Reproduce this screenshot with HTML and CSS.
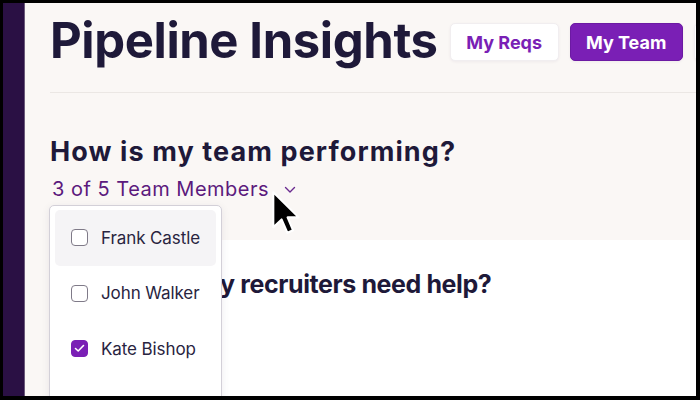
FILE: index.html
```html
<!DOCTYPE html>
<html>
<head>
<meta charset="utf-8">
<link rel="stylesheet" href="styles.css">
</head>
<body>
<div class="frame">
  <div class="app">
    <aside class="sidebar"></aside>
    <main class="main">
      <section class="top">
        <header class="header">
          <h1 class="title">Pipeline Insights</h1>
          <div class="tabs">
            <button class="tab">My Reqs</button>
            <button class="tab active">My Team</button>
            <button class="tab">My Org</button>
          </div>
        </header>
        <div class="question">
          <h2 class="q-title">How is my team performing?</h2>
          <div class="picker">
            <span class="picker-label">3 of 5 Team Members</span>
            <svg class="chev" width="12" height="8" viewBox="0 0 12 8"><path d="M1.5 1.5 L6 6 L10.5 1.5" fill="none" stroke="#6a2a8f" stroke-width="1.4" stroke-linecap="round" stroke-linejoin="round"/></svg>
            <div class="menu">
              <div class="item hover"><span class="box"></span><span class="name">Frank Castle</span></div>
              <div class="item"><span class="box"></span><span class="name">John Walker</span></div>
              <div class="item"><span class="box checked"><svg width="11" height="9" viewBox="0 0 11 9"><path d="M1.5 4.5 L4.2 7 L9.5 1.5" fill="none" stroke="#fff" stroke-width="1.6" stroke-linecap="round" stroke-linejoin="round"/></svg></span><span class="name">Kate Bishop</span></div>
              <div class="item"><span class="box checked"></span><span class="name">Yelena Belova</span></div>
            </div>
            <svg class="cursor" width="29" height="46" viewBox="0 0 12.6 20"><path d="M1 1 L1 16.2 L4.6 12.8 L7.1 18.6 L9.6 17.5 L7.2 11.9 L12 11.9 Z" fill="#000" stroke="#fff" stroke-width="0.9" stroke-linejoin="round"/></svg>
          </div>
        </div>
      </section>
      <section class="card">
        <h2 class="card-title">Which of my recruiters need help?</h2>
      </section>
    </main>
  </div>
</div>
</body>
</html>
```

FILE: styles.css
```css
html, body {
  margin: 0;
  padding: 0;
  background: #000;
}
.frame {
  width: 700px;
  height: 400px;
  box-sizing: border-box;
  padding: 3px 4px 4px 3px;
  background: #000;
  overflow: hidden;
}
.app {
  display: flex;
  height: 100%;
  font-family: Inter, "Noto Sans", sans-serif;
  overflow: hidden;
}
.sidebar {
  width: 21px;
  flex: none;
  background: #2a1044;
  border-right: 1px solid #6b5a7a;
}
.main {
  flex: 1;
  min-width: 0;
  background: #faf7f5;
  overflow: hidden;
  display: flex;
  flex-direction: column;
}
.top {
  padding: 20px 0 0 25px;
  height: 237px;
  box-sizing: border-box;
}
.header {
  display: flex;
  align-items: center;
  gap: 12px;
  padding-bottom: 31px;
  border-bottom: 1px solid #ebe7e4;
  white-space: nowrap;
}
.title {
  margin: -2px 0 0 0;
  font-size: 49px;
  line-height: 38px;
  font-weight: 700;
  letter-spacing: -0.4px;
  color: #1e1939;
}
.tabs {
  display: flex;
  gap: 11px;
  flex: none;
}
.tab {
  height: 38px;
  padding: 0 10px;
  border: 1px solid #f1eef0;
  border-radius: 5px;
  background: #fff;
  color: #7a1fb5;
  font-family: Inter, "Noto Sans", sans-serif;
  font-size: 18px;
  font-weight: 700;
  box-shadow: 0 1px 3px rgba(60, 40, 80, 0.06);
}
.tab:first-child { width: 109px; }
.tab.active {
  width: 113px;
  background: #7a1fb5;
  border-color: #6c1aa3;
  color: #fff;
}
.question {
  padding-top: 43px;
}
.q-title {
  margin: 0;
  font-size: 27px;
  line-height: 32px;
  font-weight: 700;
  letter-spacing: 1.1px;
  color: #1e1939;
}
.picker {
  position: relative;
  display: flex;
  align-items: center;
  gap: 15px;
  margin-top: 8px;
  padding-left: 2px;
}
.picker-label {
  font-size: 20px;
  line-height: 26px;
  letter-spacing: 0.5px;
  color: #5c1a7d;
}
.chev {
  margin-top: 1px;
}
.menu {
  position: absolute;
  left: -1px;
  top: 29px;
  width: 173px;
  height: 240px;
  background: #fff;
  border: 1px solid #d3d0d8;
  border-radius: 5px;
  box-shadow: 0 2px 8px rgba(40, 20, 60, 0.08);
  padding: 4px 5px;
  box-sizing: border-box;
  z-index: 2;
}
.item {
  display: flex;
  align-items: center;
  gap: 13px;
  height: 55.5px;
  padding-left: 16px;
  border-radius: 5px;
}
.item.hover {
  background: #f5f4f6;
}
.box {
  width: 17px;
  height: 17px;
  box-sizing: border-box;
  border: 1.5px solid #7f7a88;
  border-radius: 4px;
  background: #fff;
  display: flex;
  align-items: center;
  justify-content: center;
  flex: none;
}
.box.checked {
  background: #7a1fb5;
  border-color: #7a1fb5;
}
.name {
  font-size: 17px;
  color: #29243f;
  letter-spacing: -0.1px;
}
.cursor {
  position: absolute;
  left: 221px;
  top: 14px;
  z-index: 3;
}
.card {
  flex: 1;
  margin-left: 25px;
  background: #fff;
  padding: 28px 0 0 36px;
}
.card-title {
  margin: 0;
  font-size: 25px;
  line-height: 32px;
  font-weight: 700;
  letter-spacing: -0.4px;
  color: #1e1939;
  white-space: nowrap;
}
```
